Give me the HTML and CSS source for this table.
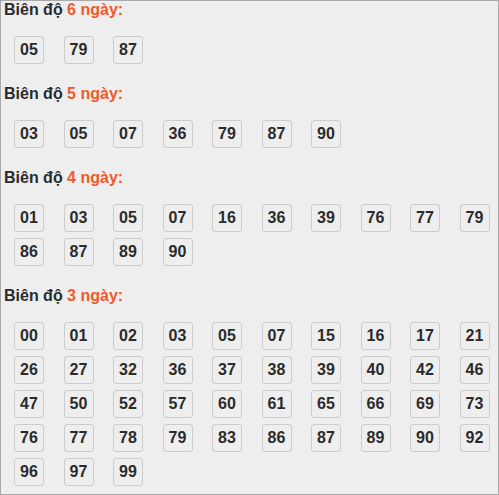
FILE: index.html
```html
<!DOCTYPE html>
<html>
<head>
<meta charset="utf-8">
<link rel="stylesheet" href="styles.css">
</head>
<body>
<div class="panel">
  <section class="group">
    <h3 class="title">Biên độ <span class="hl">6 ngày:</span></h3>
    <div class="nums">
      <span class="num">05</span><span class="num">79</span><span class="num">87</span>
    </div>
  </section>
  <section class="group">
    <h3 class="title">Biên độ <span class="hl">5 ngày:</span></h3>
    <div class="nums">
      <span class="num">03</span><span class="num">05</span><span class="num">07</span><span class="num">36</span><span class="num">79</span><span class="num">87</span><span class="num">90</span>
    </div>
  </section>
  <section class="group">
    <h3 class="title">Biên độ <span class="hl">4 ngày:</span></h3>
    <div class="nums">
      <span class="num">01</span><span class="num">03</span><span class="num">05</span><span class="num">07</span><span class="num">16</span><span class="num">36</span><span class="num">39</span><span class="num">76</span><span class="num">77</span><span class="num">79</span>
      <span class="num">86</span><span class="num">87</span><span class="num">89</span><span class="num">90</span>
    </div>
  </section>
  <section class="group">
    <h3 class="title">Biên độ <span class="hl">3 ngày:</span></h3>
    <div class="nums">
      <span class="num">00</span><span class="num">01</span><span class="num">02</span><span class="num">03</span><span class="num">05</span><span class="num">07</span><span class="num">15</span><span class="num">16</span><span class="num">17</span><span class="num">21</span>
      <span class="num">26</span><span class="num">27</span><span class="num">32</span><span class="num">36</span><span class="num">37</span><span class="num">38</span><span class="num">39</span><span class="num">40</span><span class="num">42</span><span class="num">46</span>
      <span class="num">47</span><span class="num">50</span><span class="num">52</span><span class="num">57</span><span class="num">60</span><span class="num">61</span><span class="num">65</span><span class="num">66</span><span class="num">69</span><span class="num">73</span>
      <span class="num">76</span><span class="num">77</span><span class="num">78</span><span class="num">79</span><span class="num">83</span><span class="num">86</span><span class="num">87</span><span class="num">89</span><span class="num">90</span><span class="num">92</span>
      <span class="num">96</span><span class="num">97</span><span class="num">99</span>
    </div>
  </section>
</div>
</body>
</html>
```

FILE: styles.css
```css
html, body {
  margin: 0;
  padding: 0;
  background: #eeeeee;
}

.panel {
  box-sizing: border-box;
  width: 499px;
  height: 495px;
  overflow: hidden;
  border: 1px solid #a9a9a9;
  background: #eeeeee;
  padding: 0 0 0 3px;
  font-family: "Liberation Sans", Arial, sans-serif;
  color: #2b2b2b;
}

.group {
  display: block;
}

.title {
  margin: 0;
  font-size: 16px;
  line-height: 17px;
  font-weight: bold;
  color: #2b2b2b;
}

.hl {
  color: #f1592c;
}

.nums {
  display: grid;
  grid-template-columns: repeat(10, 30px);
  column-gap: 19.5px;
  row-gap: 6px;
  padding: 18px 0 21px 10px;
}

.num {
  box-sizing: border-box;
  width: 30px;
  height: 28px;
  border: 1px solid #cccccc;
  border-radius: 3px;
  display: flex;
  align-items: center;
  justify-content: center;
  font-size: 16px;
  font-weight: bold;
  color: #2b2b2b;
}
```
